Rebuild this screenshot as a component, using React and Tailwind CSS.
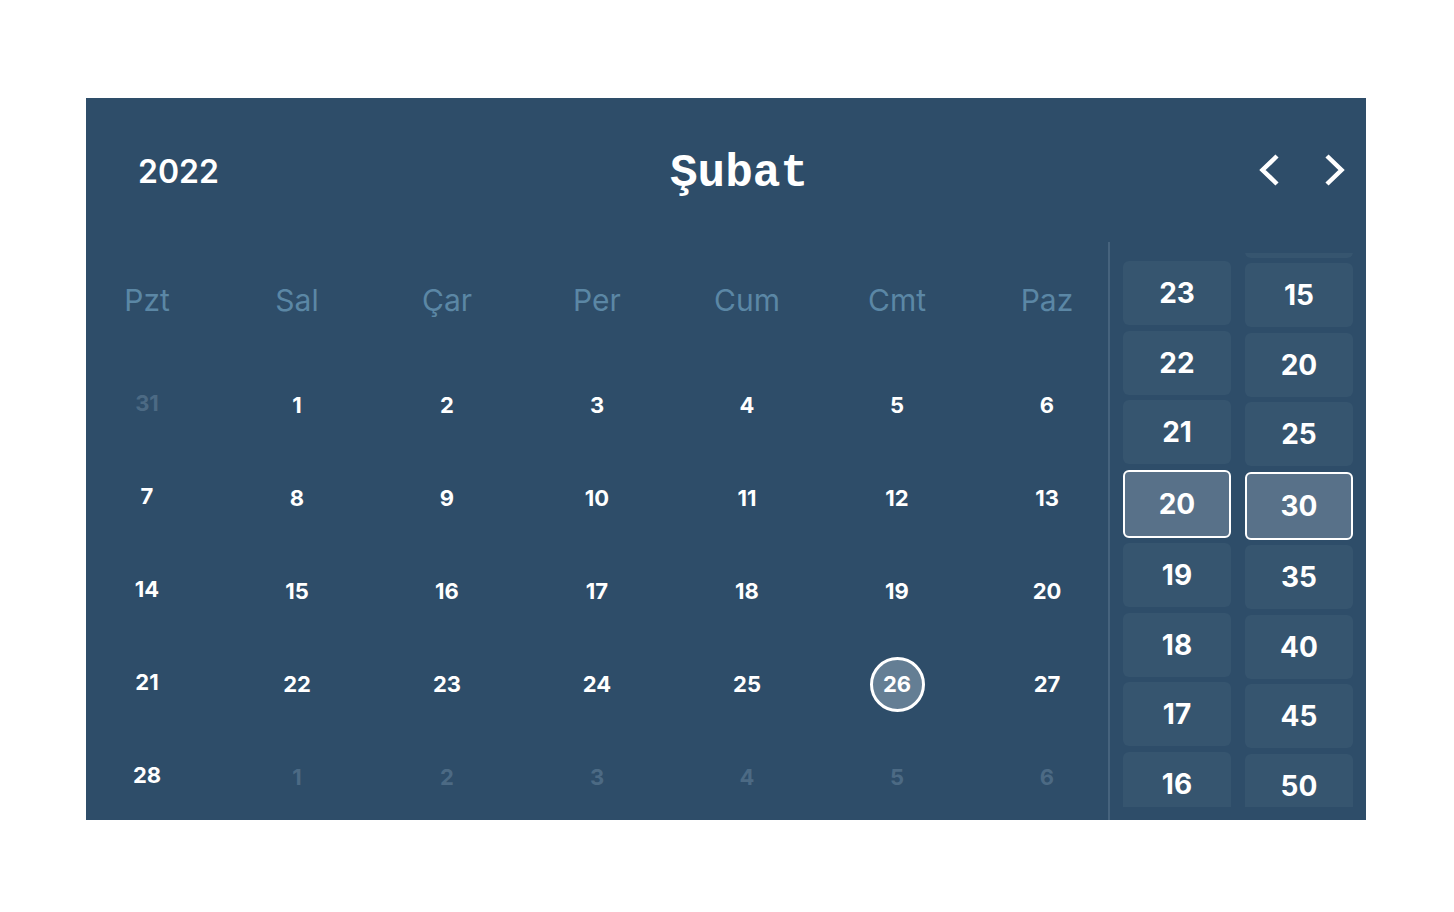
import React from 'react';

const weekdays = ['Pzt', 'Sal', 'Çar', 'Per', 'Cum', 'Cmt', 'Paz'];

// February 2022 grid, Monday first; muted = outside the month
const weeks = [
  [[31, true], [1], [2], [3], [4], [5], [6]],
  [[7], [8], [9], [10], [11], [12], [13]],
  [[14], [15], [16], [17], [18], [19], [20]],
  [[21], [22], [23], [24], [25], [26], [27]],
  [[28], [1, true], [2, true], [3, true], [4, true], [5, true], [6, true]],
];

const selectedDay = 26;
const hours = [23, 22, 21, 20, 19, 18, 17, 16];
const minutes = [10, 15, 20, 25, 30, 35, 40, 45, 50];

const TimeCell = ({ value, active }) => (
  <div
    className={
      active
        ? 'h-[68px] shrink-0 rounded-md border-2 border-white bg-[#587189] flex items-center justify-center text-[28px] font-bold text-white'
        : 'h-16 shrink-0 rounded-md bg-[#36556f] flex items-center justify-center text-[28px] font-bold text-white'
    }
  >
    {value}
  </div>
);

export default function App() {
  return (
    <div className="min-h-screen bg-white pt-[98px]" style={{ fontFamily: 'Inter, "Noto Sans", sans-serif' }}>
      <div className="ml-[86px] w-[1280px] h-[722px] bg-[#2e4d69] flex flex-col overflow-hidden">
        {/* header: year, month, arrows */}
        <div className="h-[144px] shrink-0 flex items-center pl-[52px] pr-[20px] pt-[4px]">
          <div className="w-[200px] text-[32px] font-semibold text-white">2022</div>
          <div
            className="flex-1 text-center text-[46px] font-bold text-white pr-[118px] pt-[5px]"
            style={{ fontFamily: '"Liberation Mono", "Courier New", monospace' }}
          >
            Şubat
          </div>
          <div className="flex items-center gap-[44px] -mt-[4px]">
            <svg width="22" height="34" viewBox="0 0 22 34">
              <path d="M19 3 L4.5 17 L19 31" fill="none" stroke="white" strokeWidth="4.5" />
            </svg>
            <svg width="22" height="34" viewBox="0 0 22 34">
              <path d="M3 3 L17.5 17 L3 31" fill="none" stroke="white" strokeWidth="4.5" />
            </svg>
          </div>
        </div>

        <div className="flex flex-1 min-h-0">
          {/* month grid */}
          <div className="w-[1022px] shrink-0">
            <div className="grid grid-cols-7 gap-x-[28px] h-[117px] items-center">
              {weekdays.map((d) => (
                <div key={d} className="text-center text-[30px] font-normal text-[#5b87a5]">
                  {d}
                </div>
              ))}
            </div>
            {weeks.map((week, wi) => (
              <div key={wi} className="grid grid-cols-7 gap-x-[28px] h-[93px]">
                {week.map(([n, muted], di) => (
                  <div
                    key={di}
                    className={`flex items-center justify-center ${di === 0 ? 'pb-[5px]' : ''}`}
                  >
                    {!muted && n === selectedDay ? (
                      <div className="w-[55px] h-[55px] rounded-full border-[3px] border-white bg-[#647e94] flex items-center justify-center text-[22px] font-bold text-white">
                        {n}
                      </div>
                    ) : (
                      <span className={`text-[22px] font-bold ${muted ? 'text-[#4c6a84]' : 'text-white'}`}>
                        {n}
                      </span>
                    )}
                  </div>
                ))}
              </div>
            ))}
          </div>

          {/* time picker */}
          <div className="flex-1 border-l-2 border-[#46637d] pt-[11px] pb-[13px] pl-[13px] pr-[13px]">
            <div className="h-full overflow-hidden flex gap-[14px]">
              <div className="w-[108px] flex flex-col gap-[5.5px] mt-[8px]">
                {hours.map((h) => (
                  <TimeCell key={h} value={h} active={h === 20} />
                ))}
              </div>
              <div className="w-[108px] flex flex-col gap-[5.5px] -mt-[59.5px]">
                {minutes.map((m) => (
                  <TimeCell key={m} value={m} active={m === 30} />
                ))}
              </div>
            </div>
          </div>
        </div>
      </div>
    </div>
  );
}
